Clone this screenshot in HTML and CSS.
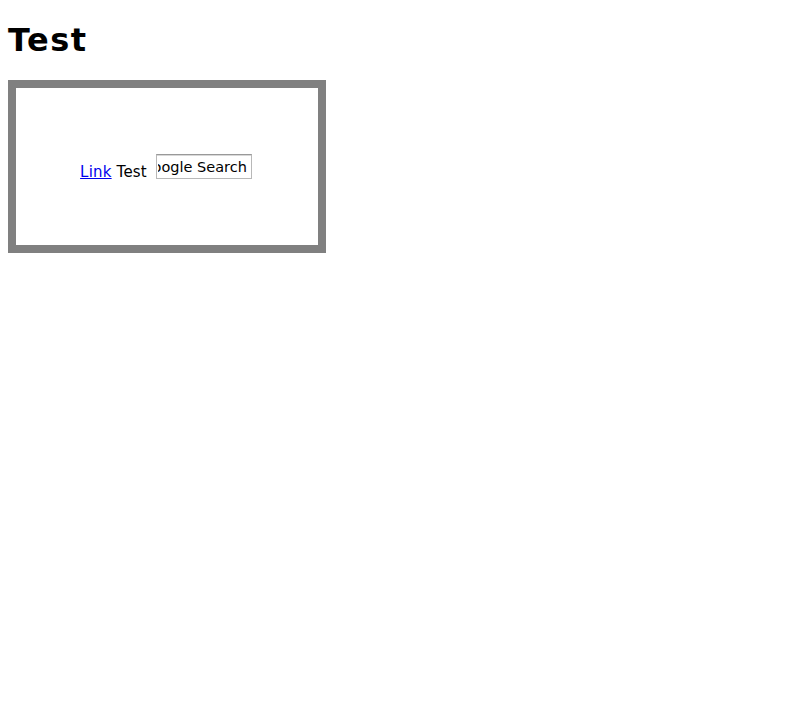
FILE: index.html
```html
<!DOCTYPE html>
<html>
<head>
<meta charset="utf-8">
<title>Test</title>
<link rel="stylesheet" href="styles.css">
</head>
<body>
<h1 class="title">Test</h1>
<div class="box">
  <div class="line"><a href="#" class="link">Link</a> Test <input class="search" type="text" value="Google Search"></div>
</div>
</body>
</html>
```
FILE: styles.css
```css
html {
  margin: 0;
  padding: 0;
}
body {
  margin: 0;
  padding: 22px 8px 8px;
  font-family: "DejaVu Sans", sans-serif;
  font-size: 15px;
  color: #000;
  background: #fff;
}
.title {
  font-family: "DejaVu Sans", sans-serif;
  font-size: 32px;
  line-height: 37px;
  font-weight: bold;
  letter-spacing: 1.5px;
  margin: 0 0 21px;
}
.box {
  width: 302px;
  height: 157px;
  border: 8px solid #808080;
  display: flex;
  align-items: center;
  justify-content: center;
}
.line {
  white-space: nowrap;
  line-height: 17px;
  letter-spacing: 0.2px;
  padding: 2px 2px 0 0;
}
.link {
  color: #0000ee;
  text-decoration: underline;
}
.search {
  box-sizing: border-box;
  width: 96px;
  height: 25px;
  margin: 0 0 0 4px;
  padding: 1px 4px 1px 1px;
  font-family: "DejaVu Sans", sans-serif;
  font-size: 14.5px;
  letter-spacing: 0;
  color: #000;
  border: 1px solid #b8b8b8;
  border-top-color: #999;
  box-shadow: inset 0 1px 0 #d8d8d8;
  direction: rtl;
  outline: none;
  vertical-align: 5px;
}
```
